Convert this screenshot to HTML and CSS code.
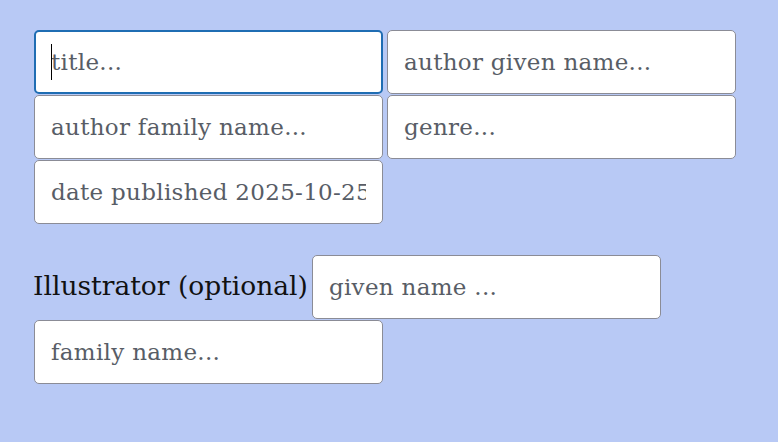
FILE: index.html
```html
<!DOCTYPE html>
<html>
<head>
<meta charset="utf-8">
<link rel="stylesheet" href="styles.css">
</head>
<body>
<form class="form">
  <div class="fields">
    <span class="caret-wrap"><input class="field focused" type="text" placeholder="title..."></span>
    <input class="field" type="text" placeholder="author given name...">
    <input class="field" type="text" placeholder="author family name...">
    <input class="field" type="text" placeholder="genre...">
    <input class="field" type="text" placeholder="date published 2025-10-25...">
  </div>
  <div class="illustrator">
    <label class="label">Illustrator (optional)</label>
    <input class="field" type="text" placeholder="given name ...">
    <input class="field" type="text" placeholder="family name...">
  </div>
</form>
</body>
</html>
```
FILE: styles.css
```css
html, body {
  margin: 0;
  background: #b8c9f5;
}
body {
  font-family: "DejaVu Serif", serif;
  color: #111;
}
.form {
  padding: 30px 0 0 34px;
  width: 710px;
}
.fields {
  display: flex;
  flex-wrap: wrap;
  gap: 1px 4px;
}
.illustrator {
  margin-top: 31px;
  display: flex;
  flex-wrap: wrap;
  align-items: baseline;
  gap: 1px 4px;
  width: 640px;
}
.label {
  font-size: 26.5px;
  margin-left: -1px;
}
.field {
  box-sizing: border-box;
  width: 349px;
  height: 64px;
  padding: 0 16px;
  font-family: "DejaVu Serif", serif;
  font-size: 23px;
  letter-spacing: 0.3px;
  color: #333;
  background: #fff;
  border: 1.5px solid #8b8c96;
  border-radius: 5px;
  outline: none;
}
.field::placeholder {
  color: #585d66;
}
.focused {
  border: 2px solid #1f6db3;
  padding-left: 15px;
}
.caret-wrap {
  position: relative;
  display: block;
}
.caret-wrap::after {
  content: "";
  position: absolute;
  left: 17px;
  top: 14px;
  width: 1px;
  height: 36px;
  background: #000;
}
```
